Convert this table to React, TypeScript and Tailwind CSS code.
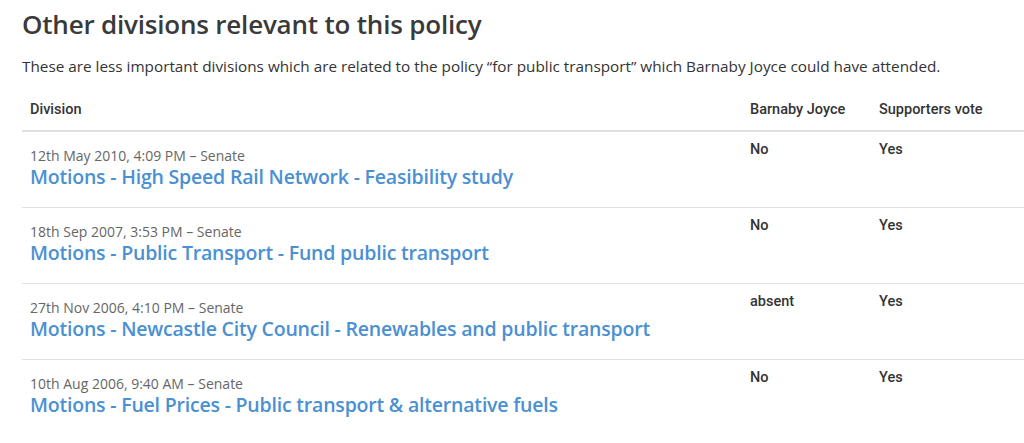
const rows = [
  { date: "12th May 2010, 4:09 PM – Senate", title: "Motions - High Speed Rail Network - Feasibility study", mp: "No", sup: "Yes" },
  { date: "18th Sep 2007, 3:53 PM – Senate", title: "Motions - Public Transport - Fund public transport", mp: "No", sup: "Yes" },
  { date: "27th Nov 2006, 4:10 PM – Senate", title: "Motions - Newcastle City Council - Renewables and public transport", mp: "absent", sup: "Yes" },
  { date: "10th Aug 2006, 9:40 AM – Senate", title: "Motions - Fuel Prices - Public transport & alternative fuels", mp: "No", sup: "Yes" },
];

const cell = "font-['Roboto',sans-serif] text-[14.5px] leading-[20px] font-medium text-[#333]";

const App = () => {
  return (
    <div className="bg-white pl-[22px] pt-[6px] text-[#333] font-['Open_Sans',sans-serif] h-[443px] overflow-hidden">
      <h1 className="text-[26px] leading-[36px] font-semibold tracking-[-0.2px] text-[#3a3a3a]">Other divisions relevant to this policy</h1>
      <p className="mt-[14px] text-[15.3px] leading-[20px]">
        These are less important divisions which are related to the policy “for public transport” which Barnaby Joyce could have attended.
      </p>
      <table className="mt-[14px] w-full border-collapse text-left">
        <thead>
          <tr className="border-b-2 border-[#e0e0e0]">
            <th className={`py-[10px] pl-[8px] ${cell}`}>Division</th>
            <th className={`w-[129px] py-[10px] ${cell}`}>Barnaby Joyce</th>
            <th className={`w-[145px] py-[10px] ${cell}`}>Supporters vote</th>
          </tr>
        </thead>
        <tbody>
          {rows.map((r, i) => (
            <tr key={i} className={i < rows.length - 1 ? "border-b border-[#e0e0e0] align-top" : "align-top"}>
              <td className="pl-[8px] pt-[15px] pb-[18px]">
                <div className="text-[14px] leading-[18px] text-[#666]">{r.date}</div>
                <a href="#" className="block text-[19.5px] leading-[24px] font-semibold text-[#4a90d2] tracking-[-0.2px]">{r.title}</a>
              </td>
              <td className={`pt-[8px] ${cell}`}>{r.mp}</td>
              <td className={`pt-[8px] ${cell}`}>{r.sup}</td>
            </tr>
          ))}
        </tbody>
      </table>
    </div>
  );
};

export default App;
